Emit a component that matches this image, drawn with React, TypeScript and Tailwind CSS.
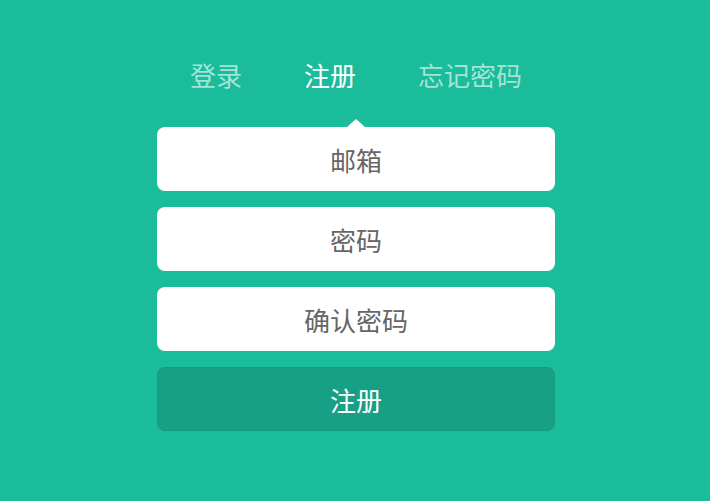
import React from "react";

export default function App() {
  const font = { fontFamily: '"Noto Sans CJK SC", "Noto Sans", sans-serif' };
  return (
    <div className="w-full h-[501px] bg-[#1bbc9b] overflow-hidden" style={font}>
      <div className="w-[398px] ml-[157px] pt-[56px]">
        <div className="flex justify-center gap-[62px] h-[38px] items-center text-[26px] leading-none">
          <span className="text-[#a4e4d6]">登录</span>
          <span className="text-white">注册</span>
          <span className="text-[#a4e4d6]">忘记密码</span>
        </div>
        <div className="relative mt-[33px] flex flex-col gap-4">
          <div className="absolute left-1/2 -translate-x-1/2 -top-[8px] w-0 h-0 border-l-[9px] border-r-[9px] border-b-[8px] border-l-transparent border-r-transparent border-b-white" />
          <div className="h-[64px] rounded-[8px] bg-white flex items-center justify-center text-[26px] text-[#666666]">邮箱</div>
          <div className="h-[64px] rounded-[8px] bg-white flex items-center justify-center text-[26px] text-[#666666]">密码</div>
          <div className="h-[64px] rounded-[8px] bg-white flex items-center justify-center text-[26px] text-[#666666]">确认密码</div>
          <div className="h-[64px] rounded-[8px] bg-[#17a085] border border-[#159a7f] flex items-center justify-center text-[26px] text-white">注册</div>
        </div>
      </div>
    </div>
  );
}
